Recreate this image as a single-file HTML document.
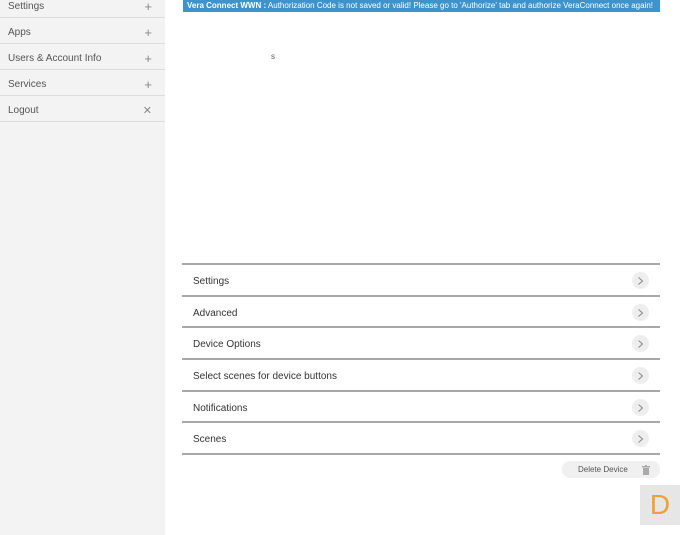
<!DOCTYPE html>
<html><head><meta charset="utf-8"><style>
*{margin:0;padding:0;box-sizing:border-box}
body{width:690px;height:535px;background:#fff;font-family:"Liberation Sans",sans-serif;position:relative;overflow:hidden}
.side{position:absolute;left:0;top:0;width:165px;height:535px;background:#f3f3f3}
.si{position:absolute;left:0;width:165px;height:26px;border-bottom:1px solid #dcdcdc;font-size:10px;color:#555;padding-left:8px;line-height:30px}
.si span{position:absolute;right:13px;top:0;font-size:13px;color:#888}
.banner{position:absolute;left:183px;top:0;width:477px;height:12px;background:#3d93cc;color:#fff;font-size:8px;line-height:12px;padding-left:4px;white-space:nowrap;overflow:hidden}
.row{position:absolute;left:182px;width:478px;height:32px;font-size:10px;color:#333;padding-left:11px;line-height:35px}
.line{position:absolute;left:182px;width:478px;height:2px;background:#a8a8a8}
.chev{position:absolute;right:11px;top:8px;width:17px;height:17px;border-radius:50%;background:#eeeeee}
.chev svg{position:absolute;left:6px;top:5px}
</style></head><body>
<div class="side">
<div class="si" style="top:-8px">Settings<span>+</span></div>
<div class="si" style="top:18px">Apps<span>+</span></div>
<div class="si" style="top:44px">Users &amp; Account Info<span>+</span></div>
<div class="si" style="top:70px">Services<span>+</span></div>
<div class="si" style="top:96px">Logout<span style="font-size:11px">✕</span></div>
</div>
<div class="banner"><b>Vera Connect WWN :</b> Authorization Code is not saved or valid! Please go to 'Authorize' tab and authorize VeraConnect once again!</div>
<div style="position:absolute;left:271px;top:52px;font-size:8px;color:#555">s</div>
<div class="line" style="top:263px"></div>
<div class="row" style="top:264px">Settings<div class="chev"><svg width="5" height="8"><path d="M0.5 0.5L4.5 4L0.5 7.5" fill="none" stroke="#888" stroke-width="1"/></svg></div></div>
<div class="line" style="top:295px"></div>
<div class="row" style="top:296px">Advanced<div class="chev"><svg width="5" height="8"><path d="M0.5 0.5L4.5 4L0.5 7.5" fill="none" stroke="#888" stroke-width="1"/></svg></div></div>
<div class="line" style="top:326px"></div>
<div class="row" style="top:327px">Device Options<div class="chev"><svg width="5" height="8"><path d="M0.5 0.5L4.5 4L0.5 7.5" fill="none" stroke="#888" stroke-width="1"/></svg></div></div>
<div class="line" style="top:358px"></div>
<div class="row" style="top:359px">Select scenes for device buttons<div class="chev"><svg width="5" height="8"><path d="M0.5 0.5L4.5 4L0.5 7.5" fill="none" stroke="#888" stroke-width="1"/></svg></div></div>
<div class="line" style="top:390px"></div>
<div class="row" style="top:391px">Notifications<div class="chev"><svg width="5" height="8"><path d="M0.5 0.5L4.5 4L0.5 7.5" fill="none" stroke="#888" stroke-width="1"/></svg></div></div>
<div class="line" style="top:421px"></div>
<div class="row" style="top:422px">Scenes<div class="chev"><svg width="5" height="8"><path d="M0.5 0.5L4.5 4L0.5 7.5" fill="none" stroke="#888" stroke-width="1"/></svg></div></div>
<div class="line" style="top:453px"></div>
<div style="position:absolute;left:562px;top:461px;width:98px;height:17px;border-radius:8px;background:#f0f0f0;font-size:8px;color:#555;line-height:17px;padding-left:16px">Delete Device
<svg style="position:absolute;left:80px;top:4px" width="8" height="10" viewBox="0 0 8 10"><rect x="0" y="1" width="8" height="1.5" fill="#aaa"/><rect x="3" y="0" width="2" height="1" fill="#aaa"/><rect x="1" y="3" width="6" height="7" fill="#aaa"/></svg></div>
<div style="position:absolute;left:640px;top:485px;width:40px;height:40px;background:#e6e6e6;color:#f0a030;font-size:28px;line-height:40px;text-align:center">D</div>
</body></html>
